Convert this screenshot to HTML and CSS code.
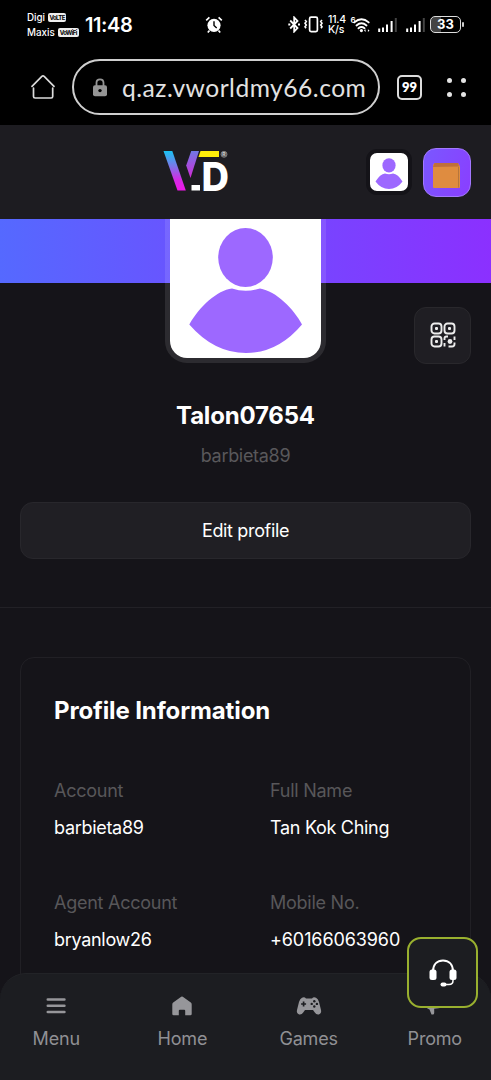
FILE: index.html
```html
<!DOCTYPE html>
<html lang="en">
<head>
<meta charset="utf-8">
<meta name="viewport" content="width=device-width, initial-scale=1">
<title>Profile</title>
<link rel="stylesheet" href="styles.css">
</head>
<body>
<div class="phone">
  <div class="status">
    <div class="carriers">
      <div class="carrier"><span>Digi</span><b class="tag tag-lte">VoLTE</b></div>
      <div class="carrier"><span>Maxis</span><b class="tag tag-wifi">VoWiFi</b></div>
    </div>
    <div class="clock">11:48</div>
    <svg class="alarm" width="18" height="18" viewBox="0 0 18 18">
      <circle cx="9" cy="9.3" r="6.6" fill="#fff"/>
      <path d="M1.2 4.3 4.4 1.4M16.8 4.3 13.6 1.4M4.5 14.5 2.8 16.5M13.5 14.5l1.7 2" stroke="#fff" stroke-width="1.7" fill="none"/>
      <path d="M9 5.2v4.3l2.7 2.5" stroke="#000" stroke-width="1.4" fill="none"/>
    </svg>
    <svg class="bluetooth" width="13" height="17" viewBox="0 0 13 17">
      <path d="M2.2 4.5 9.5 12 6.2 15.5V1.5L9.5 5 2.2 12.500" fill="none" stroke="#fff" stroke-width="1.8"/>
      <path d="M.3 8.500h2M10 8.500h2" stroke="#fff" stroke-width="1.9"/>
    </svg>
    <svg class="vibrate" width="19" height="17" viewBox="0 0 19 17">
      <rect x="5.6" y="1.2" width="7.8" height="14.4" rx="1.5" fill="none" stroke="#fff" stroke-width="1.7"/>
      <path d="m1 4 1.300 1.500L1 7.200l1.300 1.800L1 10.800l1 1.500M18 4l-1.300 1.500L18 7.200 16.700 9l1.300 1.800-1 1.500" fill="none" stroke="#fff" stroke-width="1.6"/>
    </svg>
    <div class="speed"><span>11.4</span><span>K/s</span></div>
    <svg class="wifi" width="20" height="16" viewBox="0 0 20 16">
      <path d="M3.3 5.4q7.2-6.3 14.4 0M5.5 8.4q5-4.2 10 0M7.5 11.3q3-2.4 6 0" fill="none" stroke="#fff" stroke-width="1.9" stroke-linecap="round"/>
      <circle cx="10.4" cy="13.6" r="1.6" fill="#fff"/><path d="m13 13.6 1.6-1.3v2.6zM18.5 13.6l-1.6-1.3v2.6z" fill="#fff"/>
      <text x="-.6" y="6" font-size="8" font-weight="600" fill="#fff">6</text>
    </svg>
    <svg class="signal" width="19" height="16" viewBox="0 0 19 16"><path d="M1.200 15v-3.500M5 15v-4.500M9 15V7.500M13.600 15V4" stroke="#fff" stroke-width="2"/><path d="M17.800 15V1" stroke="#444" stroke-width="2"/></svg>
    <svg class="signal signal-second" width="19" height="16" viewBox="0 0 19 16"><path d="M1.200 15v-3.500M5 15v-4.500M9 15V7.500M13.600 15V4" stroke="#fff" stroke-width="2"/><path d="M17.800 15V1" stroke="#444" stroke-width="2"/></svg>
    <div class="battery">33</div>
    <i class="battery-tip"></i>
  </div>

  <div class="browser">
    <svg class="b-home" width="24" height="26" viewBox="0 0 24 26"><path d="m1 12.300 9.800-9.900q1.200-.9 2.400 0l9.800 9.900M2.500 14v8.400q0 1.600 1.600 1.600h16q1.600 0 1.600-1.600V14" fill="none" stroke="#dcdcdc" stroke-width="1.7" stroke-linecap="round"/></svg>
    <div class="address">
      <svg width="14" height="19" viewBox="0 0 14 19"><path d="M3.5 8V4.8q0-3.4 3.5-3.4t3.5 3.4V8" fill="none" stroke="#959595" stroke-width="1.8"/><rect x="0" y="7.2" width="14" height="11" rx="2" fill="#959595"/><circle cx="7" cy="12.6" r="1.7" fill="#000"/></svg>
      <span>q.az.vworldmy66.com</span>
    </div>
    <div class="tabs">99</div>
    <div class="dots"><i></i><i></i><i></i><i></i></div>
  </div>

  <header class="top">
    <svg class="logo" width="66" height="42" viewBox="0 0 66 42">
      <defs>
        <linearGradient id="stroke-left" x1="0" y1="0" x2="0" y2="1"><stop offset="0" stop-color="#19c3f2"/><stop offset=".38" stop-color="#7a78e8"/><stop offset=".72" stop-color="#d32be4"/><stop offset="1" stop-color="#f016ea"/></linearGradient>
        <linearGradient id="stroke-right" x1="0" y1="0" x2="0" y2="1"><stop offset="0" stop-color="#6f78e6"/><stop offset="1" stop-color="#d32ad6"/></linearGradient>
      </defs>
      <path d="M.5 0H9.300L22.800 39.500H14.500z" fill="url(#stroke-left)"/>
      <path d="M28.200 0H36L27.500 27 23.200 14.500z" fill="url(#stroke-right)"/>
      <path d="M37.500 0h18.500v6H35.500z" fill="#ffee0a"/>
      <rect x="28.500" y="34" width="8.500" height="5.500" fill="#fff"/>
      <text class="logo-d" x="38.600" y="39.500" textLength="27.500" lengthAdjust="spacingAndGlyphs">D</text>
      <circle cx="61" cy="3.300" r="3" fill="#555" stroke="#8b8b8b" stroke-width=".8"/>
      <text class="logo-r" x="59.300" y="5.200">R</text>
    </svg>
    <div class="mini-avatar">
      <svg width="38" height="38" viewBox="0 0 38 38"><ellipse cx="19" cy="12.400" rx="6.600" ry="7.200" fill="#9d68ff"/><path d="M5.500 28.500q4.500-7.500 9.500-8.100q4 1.500 8 0q5 .6 9.500 8.100Q27 36 19 36T5.500 28.500z" fill="#9d68ff"/></svg>
    </div>
    <div class="wallet">
      <svg width="28" height="26" viewBox="0 0 28 26"><path d="M0 2 1.500 0H25l2 3.500V24q0 1-1 1H1q-1 0-1-1z" fill="#df8c40"/><path d="M0 4 1.500 0H25l1 3.500z" fill="#bf6f3b"/><path d="M25.500 4v20.500" stroke="#b7763b"/></svg>
    </div>
  </header>

  <main>
    <section class="hero">
      <div class="banner"></div>
      <div class="avatar">
        <svg width="151" height="139" viewBox="0 0 151 139"><ellipse cx="75.500" cy="38.500" rx="27.300" ry="29.500" fill="#9d68ff"/><path d="M19.300 105.500C30 87 47 71.500 62 69.500Q75.500 74 90 69.500C106 72 124 90 132 105.500Q108 134 76 134T19.300 105.500z" fill="#9d68ff"/></svg>
      </div>
      <button class="qr" aria-label="QR code">
        <svg width="26" height="26" viewBox="0 0 26 26" fill="none" stroke="#ededed" stroke-width="1.900"><rect x="1.500" y="1.500" width="10" height="10" rx="3"/><rect x="14.500" y="1.500" width="10" height="10" rx="3"/><rect x="1.500" y="14.500" width="10" height="10" rx="3"/><path d="M14.500 18v-1.500q0-2 2-2H18M14.500 21v3.500M18.500 24.500H22q2.500 0 2.500-2.500v-1.500M24.500 18v-3.500"/><g fill="#ededed" stroke="none"><rect x="5" y="5" width="3" height="3" rx="1"/><rect x="18" y="5" width="3" height="3" rx="1"/><rect x="5" y="18" width="3" height="3" rx="1"/><circle cx="20" cy="19.500" r="2.400"/></g></svg>
      </button>
    </section>

    <section class="identity">
      <h1>Talon07654</h1>
      <p>barbieta89</p>
      <button class="edit">Edit profile</button>
    </section>

    <section class="card">
      <h2>Profile Information</h2>
      <dl class="fields">
        <div><dt>Account</dt><dd>barbieta89</dd></div>
        <div><dt>Full Name</dt><dd>Tan Kok Ching</dd></div>
        <div><dt>Agent Account</dt><dd>bryanlow26</dd></div>
        <div><dt>Mobile No.</dt><dd class="phone-no">+60166063960</dd></div>
      </dl>
    </section>
  </main>

  <nav class="nav">
    <a><svg width="26" height="22" viewBox="0 0 26 22"><path d="M4.800 3.500h16.600M4.800 9.700h16.600M4.800 16h16.600" stroke="#96969a" stroke-width="2.600" stroke-linecap="round"/></svg><span>Menu</span></a>
    <a><svg width="26" height="22" viewBox="0 0 26 22"><path d="M12.200 .8q.8-.6 1.600 0l8 5.800q.9.700.9 1.800v9.500q0 1.400-1.400 1.400h-5.100v-4.500q0-1-1-1h-4.400q-1 0-1 1v4.500H4.700q-1.400 0-1.400-1.400V8.400q0-1.100.9-1.800z" fill="#96969a"/></svg><span>Home</span></a>
    <a><svg width="26" height="22" viewBox="0 0 26 22"><path d="M6 1.700Q8.500.5 10 2.500h6q1.500-2 4-.8 2 .8 3 4.300l2 8q.8 3.500-2.200 4.400-2.500.5-4-2L17 14H9l-1.800 2.400q-1.500 2.500-4 2-3-.9-2.200-4.400l2-8q1-3.500 3-4.300z" fill="#96969a"/><path d="M7.600 5.500v5M5.100 8h5" stroke="#1c1d21" stroke-width="1.700"/><g fill="#1c1d21"><circle cx="18.300" cy="5.300" r="1.200"/><circle cx="18.300" cy="10.500" r="1.200"/><circle cx="15.700" cy="7.900" r="1.200"/><circle cx="20.900" cy="7.900" r="1.200"/></g></svg><span>Games</span></a>
    <a><svg width="26" height="22" viewBox="0 0 26 22"><path d="M4 5 21 1v10.500q-5 .8-8.800 1.300v4.200q0 1.500-1.500 1.500H9.500L7.500 13.500Q4 12.500 4 9z" fill="#96969a"/></svg><span>Promo</span></a>
  </nav>

  <button class="support" aria-label="Support">
    <svg width="28" height="28" viewBox="0 0 28 28"><path d="M4 12.500C4 5 8.500 1.500 14 1.500S24 5 24 12.500" fill="none" stroke="#fff" stroke-width="2"/><rect x=".5" y="10.500" width="7" height="10.500" rx="2.500" fill="#fff"/><rect x="20.500" y="10.500" width="7" height="10.500" rx="2.500" fill="#fff"/><path d="M24 20v1.500q0 4-4 4h-4" fill="none" stroke="#fff" stroke-width="1.500"/><rect x="11.500" y="23.500" width="6" height="4" rx="2" fill="#fff"/></svg>
  </button>
</div>
</body>
</html>
```

FILE: styles.css
```css
* { box-sizing: border-box; }

body {
  margin: 0;
  background: #151419;
  font-family: Inter, "Liberation Sans", sans-serif;
  color: #fff;
}

h1, h2, p, dl, dd { margin: 0; }

button { padding: 0; font: inherit; color: inherit; }

svg { display: block; flex: none; }

.phone {
  position: relative;
  width: 491px;
  height: 1080px;
  overflow: hidden;
}

/* System status bar */
.status {
  display: flex;
  align-items: center;
  height: 49px;
  padding-left: 27px;
  background: #000;
}

.carriers { width: 58px; flex: none; }

.carrier {
  display: flex;
  align-items: center;
  gap: 3px;
  height: 15px;
  font-size: 9.8px;
  font-weight: 500;
}

.tag {
  height: 9px;
  border-radius: 2px;
  background: #eee;
  color: #000;
  font-size: 6px;
  line-height: 9px;
  letter-spacing: -0.6px;
  text-align: center;
}

.tag-lte { width: 18px; }
.tag-wifi { width: 21px; }

.clock { width: 50px; font-size: 20px; font-weight: 600; letter-spacing: -0.4px; }
.alarm { margin-left: 70px; }
.bluetooth { margin-left: 65px; }
.vibrate { margin-left: 3px; }

.speed {
  display: flex;
  flex-direction: column;
  flex: none;
  width: 21px;
  margin-left: 5px;
  font-size: 10.5px;
  font-weight: 500;
  line-height: 9.5px;
  letter-spacing: -0.2px;
}

.wifi { margin-left: 2px; overflow: visible; }
.signal { margin-left: 7px; }
.signal-second { margin-left: 9px; }

.battery {
  width: 31px;
  height: 17px;
  flex: none;
  margin-left: 5px;
  border: 1.5px solid #ddd;
  border-radius: 5px;
  background: linear-gradient(90deg, #444 33%, #000 33%);
  font-size: 13px;
  font-weight: 700;
  line-height: 14.5px;
  text-align: center;
}

.battery-tip { width: 2px; height: 5px; flex: none; margin-left: 1px; border-radius: 1px; background: #ccc; }

/* Browser toolbar */
.browser {
  display: flex;
  align-items: center;
  height: 76px;
  padding: 0 25px 0 31px;
  background: #000;
}

.address {
  display: flex;
  align-items: center;
  gap: 15px;
  width: 308px;
  height: 56px;
  margin-left: 17px;
  padding-left: 19px;
  border: 2px solid #cfcfcf;
  border-radius: 28px;
  color: #e2e2e2;
  font: 24.6px Lato, sans-serif;
  white-space: nowrap;
}

.address span { padding-top: 1px; letter-spacing: 0.5px; }

.tabs {
  width: 25px;
  height: 25px;
  margin-left: 17px;
  border: 2px solid #dcdcdc;
  border-radius: 5px;
  font: 800 13px/21px Lato, sans-serif;
  text-align: center;
}

.dots { display: grid; grid-template-columns: 5px 5px; gap: 9px; margin-left: 25px; }
.dots i { width: 5px; height: 5px; border-radius: 50%; background: #e4e4e4; }

/* Site header */
.top {
  display: flex;
  align-items: center;
  height: 94px;
  padding-left: 163px;
  background: #1d1c21;
}

.logo { overflow: visible; }
.logo-d { font: 800 39px Inter, sans-serif; fill: #fff; }
.logo-r { font: 700 5px Inter, sans-serif; fill: #ccc; }

.mini-avatar {
  width: 46px;
  height: 46px;
  margin-left: 137px;
  border: 4px solid #141318;
  border-radius: 11px;
  background: #fff;
}

.wallet {
  display: grid;
  place-items: center;
  width: 48px;
  height: 49px;
  margin-left: 11px;
  padding-top: 7px;
  border: 1px solid #a378ff;
  border-radius: 13px;
  background: linear-gradient(110deg, #7a58ff, #8a3eff);
}

/* Profile */
.hero { position: relative; height: 175px; }
.banner { height: 64px; background: linear-gradient(90deg, #5569ff, #8b30ff); }

.avatar {
  position: absolute;
  top: 0;
  left: 165px;
  width: 161px;
  height: 144px;
  border: 5px solid rgba(255, 255, 255, 0.1);
  border-top: 0;
  border-radius: 0 0 22px 22px;
  background: #fff;
  background-clip: padding-box;
}

.qr {
  position: absolute;
  top: 88px;
  left: 414px;
  display: grid;
  place-items: center;
  width: 57px;
  height: 57px;
  padding-bottom: 2px;
  border: 1px solid #29282c;
  border-radius: 12px;
  background: #1f1e23;
}

.identity {
  display: flex;
  flex-direction: column;
  align-items: center;
  height: 214px;
  padding: 5px 20px 0;
  border-bottom: 1px solid #222126;
}

.identity h1 { padding-top: 1px; font-size: 24px; font-weight: 700; line-height: 32px; letter-spacing: -0.2px; }
.identity p { margin-top: 12px; color: #59585b; font-size: 18px; line-height: 24px; letter-spacing: -0.3px; }

.edit {
  width: 451px;
  height: 57px;
  margin-top: 34px;
  padding-bottom: 1px;
  border: 1px solid #28272c;
  border-radius: 13px;
  background: #201f24;
  font-size: 18px;
  letter-spacing: -0.35px;
}

.card {
  height: 440px;
  margin: 49px 20px 0;
  padding: 38px 33px;
  border: 1px solid #212025;
  border-radius: 14px;
}

.card h2 { font-size: 24px; font-weight: 700; line-height: 30px; letter-spacing: -0.12px; white-space: nowrap; }

.fields {
  display: grid;
  grid-template-columns: 216px 1fr;
  row-gap: 50px;
  margin-top: 53px;
}

.fields dt { color: #58575a; font-size: 18px; line-height: 24px; letter-spacing: -0.25px; }
.fields dd { margin-top: 11px; font-size: 18px; line-height: 27px; letter-spacing: -0.3px; white-space: nowrap; }
.fields .phone-no { letter-spacing: -0.1px; }

/* Bottom navigation */
.nav {
  position: absolute;
  bottom: 0;
  left: 0;
  display: grid;
  grid-template-columns: repeat(4, 126.2px);
  justify-content: center;
  width: 491px;
  height: 107px;
  padding-top: 22px;
  border-top: 1px solid #222327;
  border-radius: 26px 26px 0 0;
  background: #1c1d21;
}

.nav a {
  display: flex;
  flex-direction: column;
  align-items: center;
  gap: 8px;
  color: #909094;
  font-size: 18px;
  line-height: 26px;
  letter-spacing: -0.2px;
}

.support {
  position: absolute;
  top: 937px;
  left: 407px;
  display: grid;
  place-items: center;
  width: 71px;
  height: 71px;
  border: 2px solid #99b02f;
  border-radius: 14px;
  background: #1c1d21;
}
```
